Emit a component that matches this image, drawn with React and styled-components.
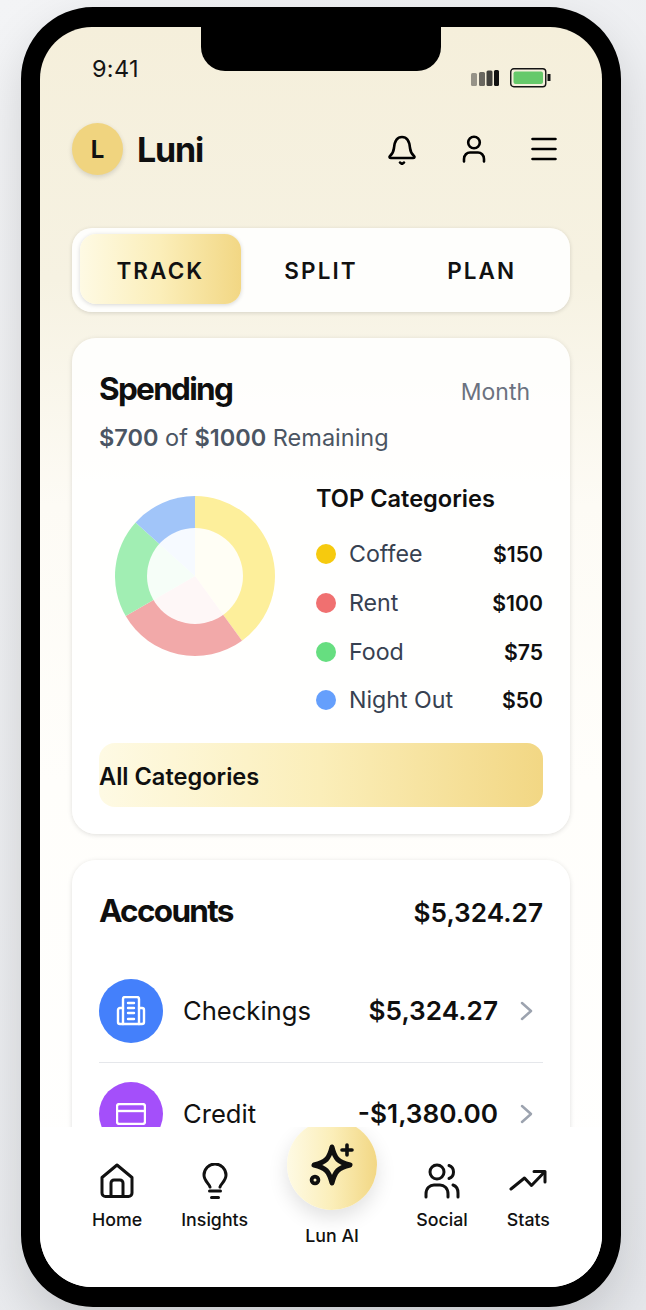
import React from 'react';
import styled, { createGlobalStyle } from 'styled-components';

const GlobalStyle = createGlobalStyle`
  * { box-sizing: border-box; }
  html, body { margin: 0; padding: 0; }
  body {
    font-family: Inter, "Liberation Sans", sans-serif;
    background: #f3f4f6;
  }
`;

const gold = 'linear-gradient(90deg, #fefae4 0%, #fbeeb9 50%, #f2d784 100%)';

const Page = styled.div`
  width: 646px;
  height: 1310px;
  padding: 7px 25px 3px 21px;
  overflow: hidden;
  background: linear-gradient(135deg, #f3f4f6 0%, #e5e7eb 100%);
`;

const Phone = styled.div`
  position: relative;
  width: 600px;
  height: 1300px;
  border: solid #000;
  border-width: 20px 19px;
  border-radius: 72px;
  background: #000;
  box-shadow: 0 20px 50px rgba(0, 0, 0, 0.14);
`;

const Screen = styled.div`
  display: flex;
  flex-direction: column;
  height: 100%;
  border-radius: 52px;
  overflow: hidden;
  background: linear-gradient(180deg, #f5efdb 0%, #f6f2e2 20%, #fdfbf5 38%, #fffefb 60%, #ffffff 100%);
`;

const Notch = styled.div`
  position: absolute;
  top: 0;
  left: 161px;
  width: 240px;
  height: 44px;
  background: #000;
  border-radius: 0 0 24px 24px;
`;

const Scroll = styled.main`
  flex: 1;
  min-height: 0;
  overflow: hidden;
  padding: 0 32px;
`;

const StatusBar = styled.div`
  display: flex;
  justify-content: space-between;
  align-items: flex-start;
  height: 96px;
  padding: 28px 18px 0 20px;
`;

const Time = styled.span`
  font-size: 23.5px;
  line-height: 28px;
  color: #141414;
  letter-spacing: 0.3px;
`;

const StatusIcons = styled.div`
  display: flex;
  align-items: center;
  gap: 10px;
  margin-top: 13px;
`;

const Header = styled.header`
  display: flex;
  align-items: center;
  justify-content: space-between;
  height: 52px;
`;

const Brand = styled.div`
  display: flex;
  align-items: center;
  gap: 14px;
`;

const Avatar = styled.div`
  display: flex;
  align-items: center;
  justify-content: center;
  width: 51px;
  height: 52px;
  border-radius: 50%;
  background: #f0d47f;
  box-shadow: 0 2px 5px rgba(0, 0, 0, 0.14);
  font-size: 24px;
  font-weight: 700;
  color: #111;
`;

const Logo = styled.h1`
  margin: 0;
  font-size: 34px;
  font-weight: 700;
  letter-spacing: -1.2px;
  color: #0f0f0f;
`;

const HeaderIcons = styled.div`
  display: flex;
  align-items: center;
  gap: 45px;
  margin-right: 13px;
`;

const Tabs = styled.div`
  display: flex;
  height: 84px;
  margin-top: 53px;
  padding: 6px 8px 8px;
  border-radius: 20px;
  background: rgba(255, 255, 255, 0.88);
  box-shadow: 0 1px 4px rgba(0, 0, 0, 0.14);
`;

const Tab = styled.div`
  flex: 1;
  display: flex;
  align-items: center;
  justify-content: center;
  padding-top: 2px;
  border-radius: 16px;
  font-size: 22.5px;
  font-weight: 600;
  letter-spacing: 2.1px;
  color: #111;
  background: ${p => (p.$active ? gold : 'transparent')};
  box-shadow: ${p => (p.$active ? '0 1px 4px rgba(0, 0, 0, 0.16)' : 'none')};
`;

const Card = styled.section`
  margin-top: 26px;
  padding: 27px;
  border-radius: 24px;
  background: rgba(255, 255, 255, 0.86);
  box-shadow: 0 1px 5px rgba(0, 0, 0, 0.13);
`;

const SpendingHead = styled.div`
  display: flex;
  align-items: center;
  justify-content: space-between;
  height: 48px;
  margin-top: -1px;
`;

const CardTitle = styled.h2`
  margin: 0;
  font-size: 31.5px;
  font-weight: 700;
  letter-spacing: -1.7px;
  color: #0f0f0f;
`;

const Period = styled.span`
  margin: 8px 13px 0 0;
  font-size: 23px;
  color: #6b7280;
`;

const Remaining = styled.p`
  margin: 10px 0 0;
  font-size: 23.5px;
  line-height: 32px;
  color: #4b5563;
  b { font-weight: 600; }
`;

const SpendingBody = styled.div`
  display: flex;
  margin-top: 30px;
`;

const ChartWrap = styled.div`
  width: 217px;
  padding: 12px 0 0 16px;
`;

const Legend = styled.div`
  flex: 1;
`;

const LegendTitle = styled.h3`
  margin: 0 0 16px;
  font-size: 23.6px;
  line-height: 30px;
  font-weight: 600;
  color: #0f0f0f;
`;

const LegendRow = styled.div`
  display: flex;
  align-items: center;
  height: 48.7px;
`;

const Dot = styled.span`
  width: 20px;
  height: 20px;
  margin-right: 13px;
  border-radius: 50%;
  background: ${p => p.$color};
`;

const LegendLabel = styled.span`
  flex: 1;
  font-size: 23.2px;
  color: #374151;
`;

const LegendValue = styled.span`
  font-size: 21.2px;
  font-weight: 600;
  color: #0f0f0f;
`;

const AllButton = styled.div`
  display: flex;
  align-items: center;
  height: 64px;
  margin-top: 18px;
  padding-top: 3px;
  border-radius: 16px;
  background: ${gold};
  font-size: 23.6px;
  font-weight: 600;
  color: #0f0f0f;
`;

const AccountsHead = styled.div`
  display: flex;
  align-items: center;
  justify-content: space-between;
  height: 48px;
  margin-bottom: 44px;
`;

const Total = styled.span`
  margin-top: 3px;
  font-size: 26.2px;
  font-weight: 600;
  color: #0f0f0f;
`;

const AccountRow = styled.div`
  display: flex;
  align-items: center;
  height: 64px;
`;

const AccountIcon = styled.div`
  display: flex;
  align-items: center;
  justify-content: center;
  flex: none;
  width: 64px;
  height: 64px;
  margin-right: 20px;
  border-radius: 50%;
  background: ${p => p.$color};
`;

const AccountName = styled.span`
  flex: 1;
  font-size: 25.6px;
  color: #111;
`;

const AccountAmount = styled.span`
  font-size: 26.2px;
  font-weight: 600;
  color: #0f0f0f;
`;

const Chevron = styled.span`
  display: flex;
  margin-left: 22px;
  margin-right: 10px;
`;

const Divider = styled.hr`
  height: 1px;
  margin: 19px 0 19px;
  border: 0;
  background: #e5e7eb;
`;

const BottomNav = styled.nav`
  flex: none;
  display: flex;
  justify-content: space-between;
  align-items: flex-start;
  height: 160px;
  padding: 0 52px;
  overflow: hidden;
  background: #fff;
`;

const NavItem = styled.div`
  display: flex;
  flex-direction: column;
  align-items: center;
  padding-top: 34px;
  font-size: 17.8px;
  font-weight: 500;
  color: #111;
`;

const NavIcon = styled.div`
  display: flex;
  align-items: center;
  justify-content: center;
  height: 40px;
  margin-bottom: 8px;
`;

const AiItem = styled.div`
  display: flex;
  flex-direction: column;
  align-items: center;
  margin-top: -7px;
  font-size: 17.8px;
  font-weight: 500;
  color: #111;
`;

const AiButton = styled.div`
  display: flex;
  align-items: center;
  justify-content: center;
  width: 90px;
  height: 90px;
  margin-bottom: 15px;
  border-radius: 50%;
  background: ${gold};
  box-shadow: 0 8px 20px rgba(0, 0, 0, 0.12);
`;

const Line = ({ w, h, children, sw = 2.6 }) => (
  <svg width={w} height={h} viewBox={`0 0 ${w} ${h}`} fill="none" stroke="currentColor" strokeWidth={sw} strokeLinecap="round" strokeLinejoin="round">
    {children}
  </svg>
);

const Bell = () => (
  <Line w={30} h={32}>
    <path d="M3 23c2.500-2 3.500-4 4-8 .5-6 3-11 8-11s7.500 5 8 11c.5 4 1.500 6 4 8 1 1 .5 2-1 2H4c-1.500 0-2-1-1-2z" />
    <path d="M13 29.500l2 1.500 2-1.500" />
  </Line>
);

const User = () => (
  <Line w={24} h={28}>
    <circle cx="12" cy="7.500" r="5.800" />
    <path d="M2 26.500v-2.500c0-4 3-6.500 6-6.500h8c3 0 6 2.500 6 6.500v2.500" />
  </Line>
);

const Menu = () => (
  <Line w={26} h={24}>
    <path d="M1.500 2h23M1.500 12h23M1.500 22h23" />
  </Line>
);

const Signal = () => (
  <svg width="29" height="16" viewBox="0 0 29 16">
    <rect x="0" y="3" width="6" height="13" rx="1.500" fill="#141414" opacity="0.42" />
    <rect x="8" y="2" width="6" height="14" rx="1.500" fill="#141414" opacity="0.62" />
    <rect x="15.500" y="0.500" width="6" height="15.500" rx="1.500" fill="#141414" opacity="0.8" />
    <rect x="23" y="0" width="5" height="16" rx="1.500" fill="#111" />
  </svg>
);

const Battery = () => (
  <svg width="42" height="20" viewBox="0 0 42 20">
    <rect x="0.750" y="0.750" width="35" height="18" rx="3" fill="none" stroke="#141414" strokeWidth="1.400" />
    <rect x="3.500" y="3.500" width="29.500" height="12.500" rx="2" fill="#66c96a" />
    <rect x="37.500" y="6" width="3" height="7" fill="#141414" />
  </svg>
);

const HomeIcon = () => (
  <Line w={34} h={36} sw={3}>
    <path d="M2 14.500L17 2l15 12.500V30a3.500 3.500 0 0 1-3.500 3.500h-23A3.500 3.500 0 0 1 2 30z" />
    <path d="M11 33.500V20a3 3 0 0 1 3-3h6a3 3 0 0 1 3 3v13.500" />
  </Line>
);

const BulbIcon = () => (
  <Line w={26} h={36} sw={3}>
    <path d="M8 24c-.5-3-6-6-6-12a11 11 0 0 1 22 0c0 6-5.500 9-6 12" />
    <path d="M7.500 28h11M9.500 34.500h7" />
  </Line>
);

const SocialIcon = () => (
  <Line w={36} h={36} sw={3}>
    <circle cx="13" cy="9" r="7" />
    <path d="M2 34v-3c0-6 4-9 8-9h6c4 0 8 3 8 9v3" />
    <path d="M25 2.500c3 1 4.500 3.500 4.500 6.500s-1.500 5.500-4.500 6.500" />
    <path d="M29 22c3 1 5 4 5 8v4" />
  </Line>
);

const StatsIcon = () => (
  <Line w={38} h={24} sw={3}>
    <path d="M2 20l13.500-11 7 7.500L35.500 3" />
    <path d="M25 2.500h11V13" />
  </Line>
);

const SparkleIcon = () => (
  <svg width="48" height="50" viewBox="-24 -25 48 50" fill="none" stroke="#0f0f0f" strokeWidth="5" strokeLinecap="round" strokeLinejoin="round">
    <path d="M0 -18C3 -6 6 -3 18 0C6 3 3 6 0 18C-3 6 -6 3 -18 0C-6 -3 -3 -6 0 -18Z" />
    <path d="M15 -20v10M10 -15h10" strokeWidth="3.600" />
    <circle cx="-17" cy="15" r="3.400" strokeWidth="3.800" />
  </svg>
);

const BuildingIcon = () => (
  <svg width="30" height="30" viewBox="0 0 30 30" fill="none" stroke="#fff" strokeWidth="2.400" strokeLinecap="round" strokeLinejoin="round">
    <path d="M7 12H4a2 2 0 0 0-2 2v12a2 2 0 0 0 2 2h22a2 2 0 0 0 2-2V14a2 2 0 0 0-2-2h-3" />
    <path d="M7 28V3a2 2 0 0 1 2-2h12a2 2 0 0 1 2 2v25" />
    <path d="M12 7h6M12 12h6M12 17h6M12 23h6" />
  </svg>
);

const CardIcon = () => (
  <svg width="30" height="22" viewBox="0 0 30 22" fill="none" stroke="#fff" strokeWidth="2.400" strokeLinejoin="round">
    <rect x="1" y="1" width="28" height="20" rx="2.500" />
    <path d="M1 8h28" />
  </svg>
);

const ChevronIcon = () => (
  <svg width="13" height="20" viewBox="0 0 13 20" fill="none" stroke="#9ca3af" strokeWidth="2.500" strokeLinecap="round" strokeLinejoin="round">
    <path d="M2 2l9 8-9 8" />
  </svg>
);

const categories = [
  { name: 'Coffee', value: 150, color: '#f6ca0e', slice: '#fdef9b' },
  { name: 'Rent', value: 100, color: '#f07070', slice: '#f2a9a9' },
  { name: 'Food', value: 75, color: '#66de80', slice: '#a1eeb3' },
  { name: 'Night Out', value: 50, color: '#659ffc', slice: '#a1c5f9' },
];

const slicePath = (from, to, r) => {
  const point = a => [r * Math.sin(a), -r * Math.cos(a)];
  const [x1, y1] = point(from);
  const [x2, y2] = point(to);
  return `M0 0L${x1} ${y1}A${r} ${r} 0 ${to - from > Math.PI ? 1 : 0} 1 ${x2} ${y2}Z`;
};

const Donut = () => {
  const total = categories.reduce((sum, c) => sum + c.value, 0);
  let angle = 0;
  return (
    <svg width="160" height="160" viewBox="-80 -80 160 160">
      {categories.map(c => {
        const from = angle;
        angle += (c.value / total) * Math.PI * 2;
        return <path key={c.name} d={slicePath(from, angle, 80)} fill={c.slice} />;
      })}
      <circle r="48" fill="#fff" opacity="0.9" />
    </svg>
  );
};

export default function App() {
  return (
    <>
      <GlobalStyle />
      <Page>
        <Phone>
          <Screen>
            <Scroll>
              <StatusBar>
                <Time>9:41</Time>
                <StatusIcons>
                  <Signal />
                  <Battery />
                </StatusIcons>
              </StatusBar>

              <Header>
                <Brand>
                  <Avatar>L</Avatar>
                  <Logo>Luni</Logo>
                </Brand>
                <HeaderIcons>
                  <Bell />
                  <User />
                  <Menu />
                </HeaderIcons>
              </Header>

              <Tabs>
                <Tab $active>TRACK</Tab>
                <Tab>SPLIT</Tab>
                <Tab>PLAN</Tab>
              </Tabs>

              <Card>
                <SpendingHead>
                  <CardTitle>Spending</CardTitle>
                  <Period>Month</Period>
                </SpendingHead>
                <Remaining><b>$700</b> of <b>$1000</b> Remaining</Remaining>
                <SpendingBody>
                  <ChartWrap>
                    <Donut />
                  </ChartWrap>
                  <Legend>
                    <LegendTitle>TOP Categories</LegendTitle>
                    {categories.map(c => (
                      <LegendRow key={c.name}>
                        <Dot $color={c.color} />
                        <LegendLabel>{c.name}</LegendLabel>
                        <LegendValue>${c.value}</LegendValue>
                      </LegendRow>
                    ))}
                  </Legend>
                </SpendingBody>
                <AllButton>All Categories</AllButton>
              </Card>

              <Card>
                <AccountsHead>
                  <CardTitle>Accounts</CardTitle>
                  <Total>$5,324.27</Total>
                </AccountsHead>
                <AccountRow>
                  <AccountIcon $color="#4480fb"><BuildingIcon /></AccountIcon>
                  <AccountName>Checkings</AccountName>
                  <AccountAmount>$5,324.27</AccountAmount>
                  <Chevron><ChevronIcon /></Chevron>
                </AccountRow>
                <Divider />
                <AccountRow>
                  <AccountIcon $color="#a44ffa"><CardIcon /></AccountIcon>
                  <AccountName>Credit</AccountName>
                  <AccountAmount>-$1,380.00</AccountAmount>
                  <Chevron><ChevronIcon /></Chevron>
                </AccountRow>
              </Card>
            </Scroll>

            <BottomNav>
              <NavItem><NavIcon><HomeIcon /></NavIcon>Home</NavItem>
              <NavItem><NavIcon><BulbIcon /></NavIcon>Insights</NavItem>
              <AiItem>
                <AiButton><SparkleIcon /></AiButton>
                Lun AI
              </AiItem>
              <NavItem><NavIcon><SocialIcon /></NavIcon>Social</NavItem>
              <NavItem><NavIcon><StatsIcon /></NavIcon>Stats</NavItem>
            </BottomNav>
          </Screen>
          <Notch />
        </Phone>
      </Page>
    </>
  );
}
